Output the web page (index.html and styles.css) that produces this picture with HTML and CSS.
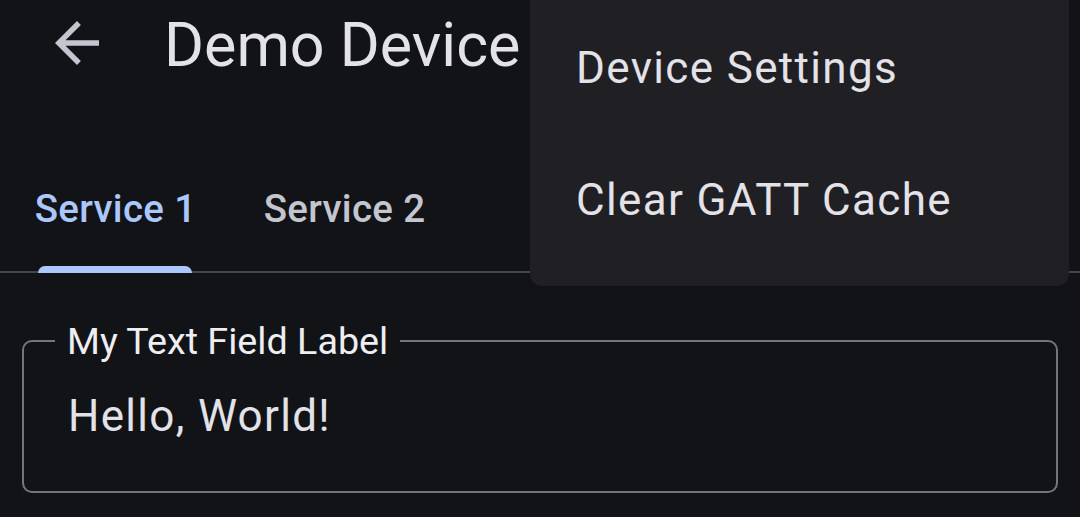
FILE: index.html
```html
<!DOCTYPE html>
<html lang="en">
<head>
<meta charset="utf-8">
<title>Demo Device</title>
<link rel="stylesheet" href="styles.css">
</head>
<body>
<div class="screen">
  <header class="topbar">
    <button class="icon-btn" aria-label="Back">
      <svg viewBox="0 0 24 24" width="66" height="66"><path fill="currentColor" d="M20 11H7.83l5.59-5.59L12 4l-8 8 8 8 1.41-1.41L7.83 13H20v-2z"/></svg>
    </button>
    <h1 class="title">Demo Device</h1>
  </header>

  <nav class="tabs">
    <div class="tab active">Service 1<span class="indicator"></span></div>
    <div class="tab">Service 2</div>
  </nav>

  <fieldset class="field">
    <legend class="field-label">My Text Field Label</legend>
    <div class="field-value">Hello, World!</div>
  </fieldset>

  <div class="menu">
    <div class="menu-item">Device Settings</div>
    <div class="menu-item">Clear GATT Cache</div>
  </div>
</div>
</body>
</html>
```

FILE: styles.css
```css
html, body {
  margin: 0;
  padding: 0;
  background: #121317;
}

body {
  font-family: Roboto, "Noto Sans", "Liberation Sans", sans-serif;
  color: #e3e2e8;
}

.screen {
  position: relative;
  width: 1080px;
  height: 517px;
  overflow: hidden;
  background: #121317;
}

.topbar {
  height: 141px;
  display: flex;
  align-items: flex-start;
  padding-left: 44px;
  box-sizing: border-box;
}

.icon-btn {
  width: 66px;
  height: 66px;
  margin-top: 10px;
  padding: 0;
  border: 0;
  background: none;
  color: #c4c6cf;
  display: flex;
}

.title {
  margin: 0 0 0 54px;
  font-size: 61px;
  font-weight: 400;
  line-height: 90px;
  color: #e3e2e8;
}

.tabs {
  display: flex;
  height: 132px;
  border-bottom: 2px solid #44464d;
  box-sizing: border-box;
}

.tab {
  position: relative;
  width: 231px;
  display: flex;
  align-items: center;
  justify-content: center;
  padding-top: 4px;
  box-sizing: border-box;
  font-size: 38.5px;
  font-weight: 500;
  letter-spacing: 0.3px;
  color: #c4c6cf;
}

.tab.active {
  color: #abc7fb;
}

.tab + .tab {
  margin-left: -2px;
}

.indicator {
  position: absolute;
  left: 38px;
  width: 154px;
  bottom: -2px;
  height: 7px;
  background: #abc7fb;
  border-radius: 8px 8px 0 0;
}

.field {
  margin: 48px 22px 0;
  padding: 0 0 20px;
  border: 2px solid #75767c;
  border-radius: 10px;
  height: 172px;
  box-sizing: border-box;
  min-width: 0;
}

.field-label {
  margin-left: 31px;
  padding: 0 12px;
  font-size: 37.7px;
  line-height: 40px;
  color: #eeeef2;
}

.field-value {
  height: 110px;
  display: flex;
  align-items: center;
  padding-left: 44px;
  font-size: 44px;
  letter-spacing: 1.3px;
  color: #e3e2e8;
}

.menu {
  position: absolute;
  top: -20px;
  left: 530px;
  width: 539px;
  padding: 22px 0 20px;
  background: #1f1f24;
  border-radius: 12px;
  box-sizing: border-box;
}

.menu-item {
  height: 132px;
  display: flex;
  align-items: center;
  padding-left: 46px;
  font-size: 44px;
  letter-spacing: 1.35px;
  color: #e3e2e8;
}
```
